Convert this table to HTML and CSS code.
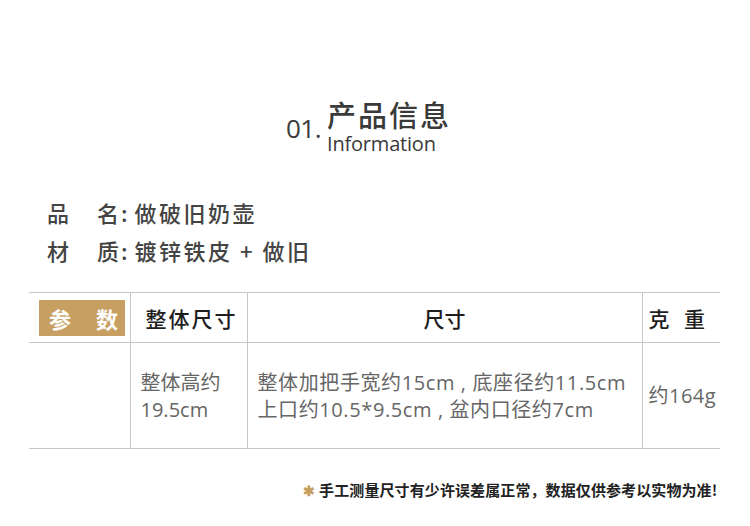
FILE: index.html
```html
<!DOCTYPE html>
<html lang="zh-CN">
<head>
<meta charset="utf-8">
<link rel="stylesheet" href="styles.css">
</head>
<body>
<div class="page">
  <header class="title">
    <span class="num">01.</span>
    <div class="title-text">
      <div class="cn">产品信息</div>
      <div class="en">Information</div>
    </div>
  </header>

  <div class="specs">
    <div class="spec"><span class="label"><span>品</span><span>名</span></span><span class="colon">:</span><span class="value">做破旧奶壶</span></div>
    <div class="spec"><span class="label"><span>材</span><span>质</span></span><span class="colon">:</span><span class="value">镀锌铁皮 + 做旧</span></div>
  </div>

  <table class="params">
    <colgroup>
      <col class="c1"><col class="c2"><col class="c3"><col class="c4">
    </colgroup>
    <thead>
      <tr>
        <th class="tag-cell"><span class="tag"><span>参</span><span>数</span></span></th>
        <th class="left">整体尺寸</th>
        <th>尺寸</th>
        <th class="wide">克 重</th>
      </tr>
    </thead>
    <tbody>
      <tr>
        <td></td>
        <td class="left">整体高约<br>19.5cm</td>
        <td class="left dims">整体加把手宽约15cm , 底座径约11.5cm<br>上口约10.5*9.5cm , 盆内口径约7cm</td>
        <td class="left weight">约164g</td>
      </tr>
    </tbody>
  </table>

  <p class="note"><span class="star">✱</span>手工测量尺寸有少许误差属正常，数据仅供参考以实物为准!</p>
</div>
</body>
</html>
```
FILE: styles.css
```css
html, body {
  margin: 0;
  padding: 0;
  background: #ffffff;
}
body {
  font-family: "Open Sans", "Noto Sans CJK SC", sans-serif;
  color: #333;
}
.page {
  width: 750px;
  height: 526px;
  position: relative;
  overflow: hidden;
}
.title {
  display: flex;
  align-items: flex-start;
  padding-top: 95px;
  padding-left: 286px;
  height: 67px;
}
.num {
  font-family: "Open Sans", sans-serif;
  font-size: 26px;
  color: #3a3a3a;
  margin-top: 15px;
  letter-spacing: -0.5px;
}
.title-text {
  margin-left: 6px;
}
.cn {
  font-family: "Noto Sans CJK SC", sans-serif;
  font-size: 29px;
  line-height: 38px;
  letter-spacing: 2px;
  color: #3a3a3a;
  font-weight: 500;
}
.en {
  font-family: "Open Sans", sans-serif;
  font-size: 20px;
  line-height: 22px;
  color: #3a3a3a;
  letter-spacing: -0.2px;
  margin-top: 0;
}
.specs {
  margin-top: 31px;
  padding-left: 47px;
}
.spec {
  display: flex;
  align-items: center;
  height: 38px;
  font-family: "Noto Sans CJK SC", sans-serif;
  font-size: 22px;
  font-weight: 500;
  color: #444;
}
.label {
  display: flex;
  justify-content: space-between;
  width: 72px;
}
.colon {
  margin: 0 7px 0 2px;
}
.value {
  letter-spacing: 2.5px;
}
.params {
  margin-top: 23px;
  margin-left: 29px;
  width: 691px;
  border-collapse: collapse;
  table-layout: fixed;
  font-family: "Open Sans", "Noto Sans CJK SC", sans-serif;
}
.c1 { width: 101px; }
.c2 { width: 117px; }
.c3 { width: 395px; }
.c4 { width: 78px; }
.params th, .params td {
  border-left: 1px solid #c6c6c6;
  padding: 0;
}
.params th:first-child, .params td:first-child {
  border-left: none;
}
.params thead tr {
  height: 50px;
  border-top: 1px solid #c6c6c6;
  border-bottom: 1px solid #c6c6c6;
}
.params tbody tr {
  height: 106px;
  border-bottom: 1px solid #c6c6c6;
}
.params th {
  font-family: "Noto Sans CJK SC", sans-serif;
  font-size: 21px;
  font-weight: 500;
  color: #1e1e1e;
  text-align: center;
}
.params th.left {
  text-align: left;
  padding-left: 15px;
  letter-spacing: 2px;
}
.params th.wide {
  letter-spacing: 5px;
  padding-right: 4px;
}
.tag-cell {
  vertical-align: middle;
}
.tag {
  display: flex;
  justify-content: space-between;
  align-items: center;
  margin-left: 10px;
  width: 86px;
  height: 36px;
  box-sizing: border-box;
  padding: 0 7px 0 10px;
  background: #c79f62;
  color: #ffffff;
  font-size: 22px;
  font-weight: 700;
}
.params td {
  font-size: 20px;
  color: #666;
  line-height: 27px;
  vertical-align: middle;
}
.params td.left {
  padding-left: 10px;
}
.params td.dims {
  padding-left: 10px;
  letter-spacing: 0.6px;
  white-space: nowrap;
}
.params td.weight {
  padding-left: 6px;
  letter-spacing: 0.5px;
  white-space: nowrap;
}
.note {
  margin: 0;
  position: absolute;
  left: 303px;
  top: 479px;
  font-family: "Noto Sans CJK SC", sans-serif;
  font-size: 15px;
  font-weight: 700;
  letter-spacing: 0.1px;
  color: #222;
  line-height: 22px;
}
.star {
  color: #c79f62;
  font-size: 14px;
  margin-right: 4px;
  vertical-align: 0;
}
```
